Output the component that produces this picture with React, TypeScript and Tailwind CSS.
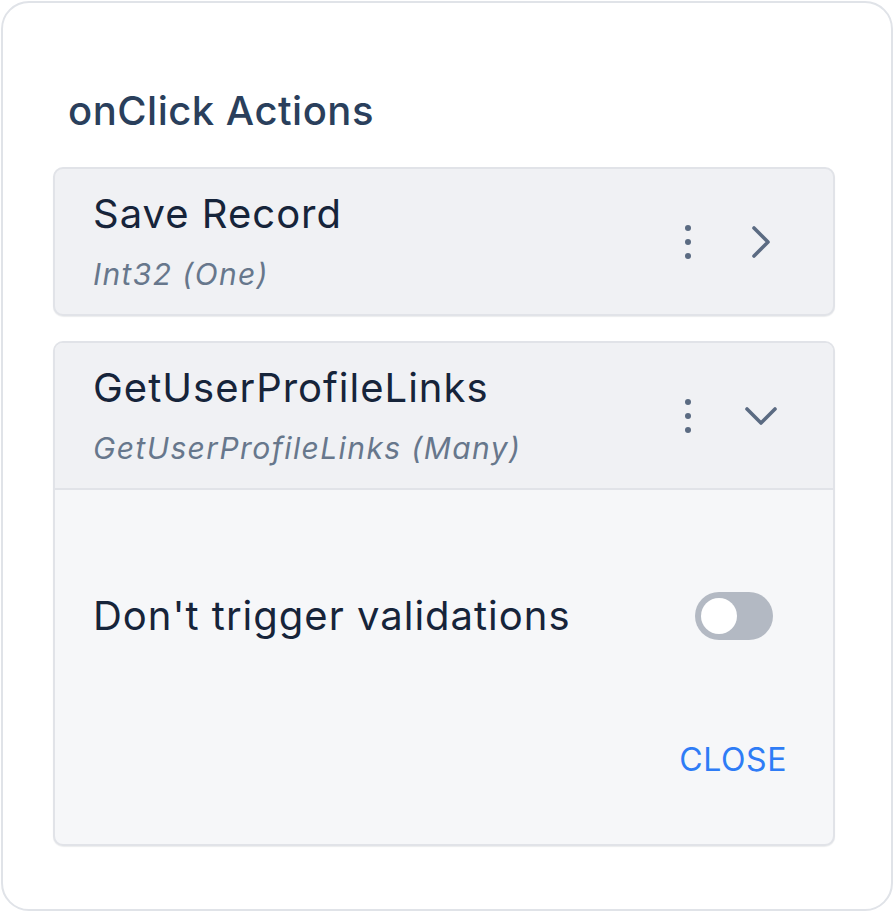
import React, { useState } from "react";

function Kebab() {
  return (
    <svg width="10" height="36" viewBox="0 0 10 36" className="text-[#5b6b82]">
      <circle cx="5" cy="4" r="3" fill="currentColor" />
      <circle cx="5" cy="18" r="3" fill="currentColor" />
      <circle cx="5" cy="32" r="3" fill="currentColor" />
    </svg>
  );
}

function Chevron({ open }: { open: boolean }) {
  return (
    <svg width="32" height="32" viewBox="0 0 32 32" className="text-[#5b6b82]" fill="none">
      {open ? (
        <path d="M2 9 L16 23 L30 9" stroke="currentColor" strokeWidth="3.6" strokeLinecap="round" strokeLinejoin="round" />
      ) : (
        <path d="M9 2 L23 16 L9 30" stroke="currentColor" strokeWidth="3.6" strokeLinecap="round" strokeLinejoin="round" />
      )}
    </svg>
  );
}

function ActionHeader({ title, subtitle, open }: { title: string; subtitle: string; open: boolean }) {
  return (
    <div className="flex items-center pl-[38px] pr-[56px] pt-[21px] pb-[20px] h-[145px] box-border">
      <div className="flex-1 min-w-0">
        <div className="text-[40px] leading-[48px] tracking-[1px] text-[#16243a]">{title}</div>
        <div className="mt-[16px] text-[30px] leading-[40px] tracking-[1.4px] italic text-[#67778c]">{subtitle}</div>
      </div>
      <div className="flex items-center">
        <Kebab />
        <div className="w-[84px] flex justify-end">
          <Chevron open={open} />
        </div>
      </div>
    </div>
  );
}

export default function App() {
  const [enabled, setEnabled] = useState(false);

  return (
    <div className="w-[894px] h-[912px] bg-white p-px" style={{ fontFamily: "Inter, 'Noto Sans', sans-serif" }}>
      <div className="w-[892px] h-[910px] box-border border-2 border-[#e0e3e8] rounded-[28px] bg-white pl-[50px] pr-[56px] pt-[84px]">
        {/* Heading */}
        <h2 className="pl-[15px] text-[40px] leading-[48px] tracking-[0.5px] font-medium text-[#2a3f5c]">
          onClick Actions
        </h2>

        <div className="mt-[32px] flex flex-col gap-[25px]">
          {/* Collapsed action */}
          <div className="bg-[#f0f1f4] border-2 border-[#e1e3e8] rounded-[10px] shadow-[0_1px_1px_rgba(15,23,42,0.08)]">
            <ActionHeader title="Save Record" subtitle="Int32 (One)" open={false} />
          </div>

          {/* Expanded action */}
          <div className="bg-[#f6f7f9] border-2 border-[#e1e3e8] rounded-[10px] overflow-hidden shadow-[0_1px_1px_rgba(15,23,42,0.08)]">
            <div className="bg-[#f0f1f4] border-b-2 border-[#e1e3e8]">
              <ActionHeader title="GetUserProfileLinks" subtitle="GetUserProfileLinks (Many)" open={true} />
            </div>
            <div className="pl-[38px] pr-[60px] pt-[102px] pb-[64px]">
              <div className="flex items-center justify-between h-[48px]">
                <span className="text-[40px] leading-[48px] tracking-[1px] text-[#16243a]">Don't trigger validations</span>
                <button
                  onClick={() => setEnabled(!enabled)}
                  className="w-[78px] h-[48px] rounded-full bg-[#b3b9c3] p-[6px] flex items-center"
                >
                  <span className="w-[36px] h-[36px] rounded-full bg-white block" />
                </button>
              </div>
              <div className="mt-[100px] flex justify-end -mr-[14px]">
                <button className="text-[32px] leading-[40px] text-[#2e7cf6] tracking-[0.6px]">CLOSE</button>
              </div>
            </div>
          </div>
        </div>
      </div>
    </div>
  );
}
